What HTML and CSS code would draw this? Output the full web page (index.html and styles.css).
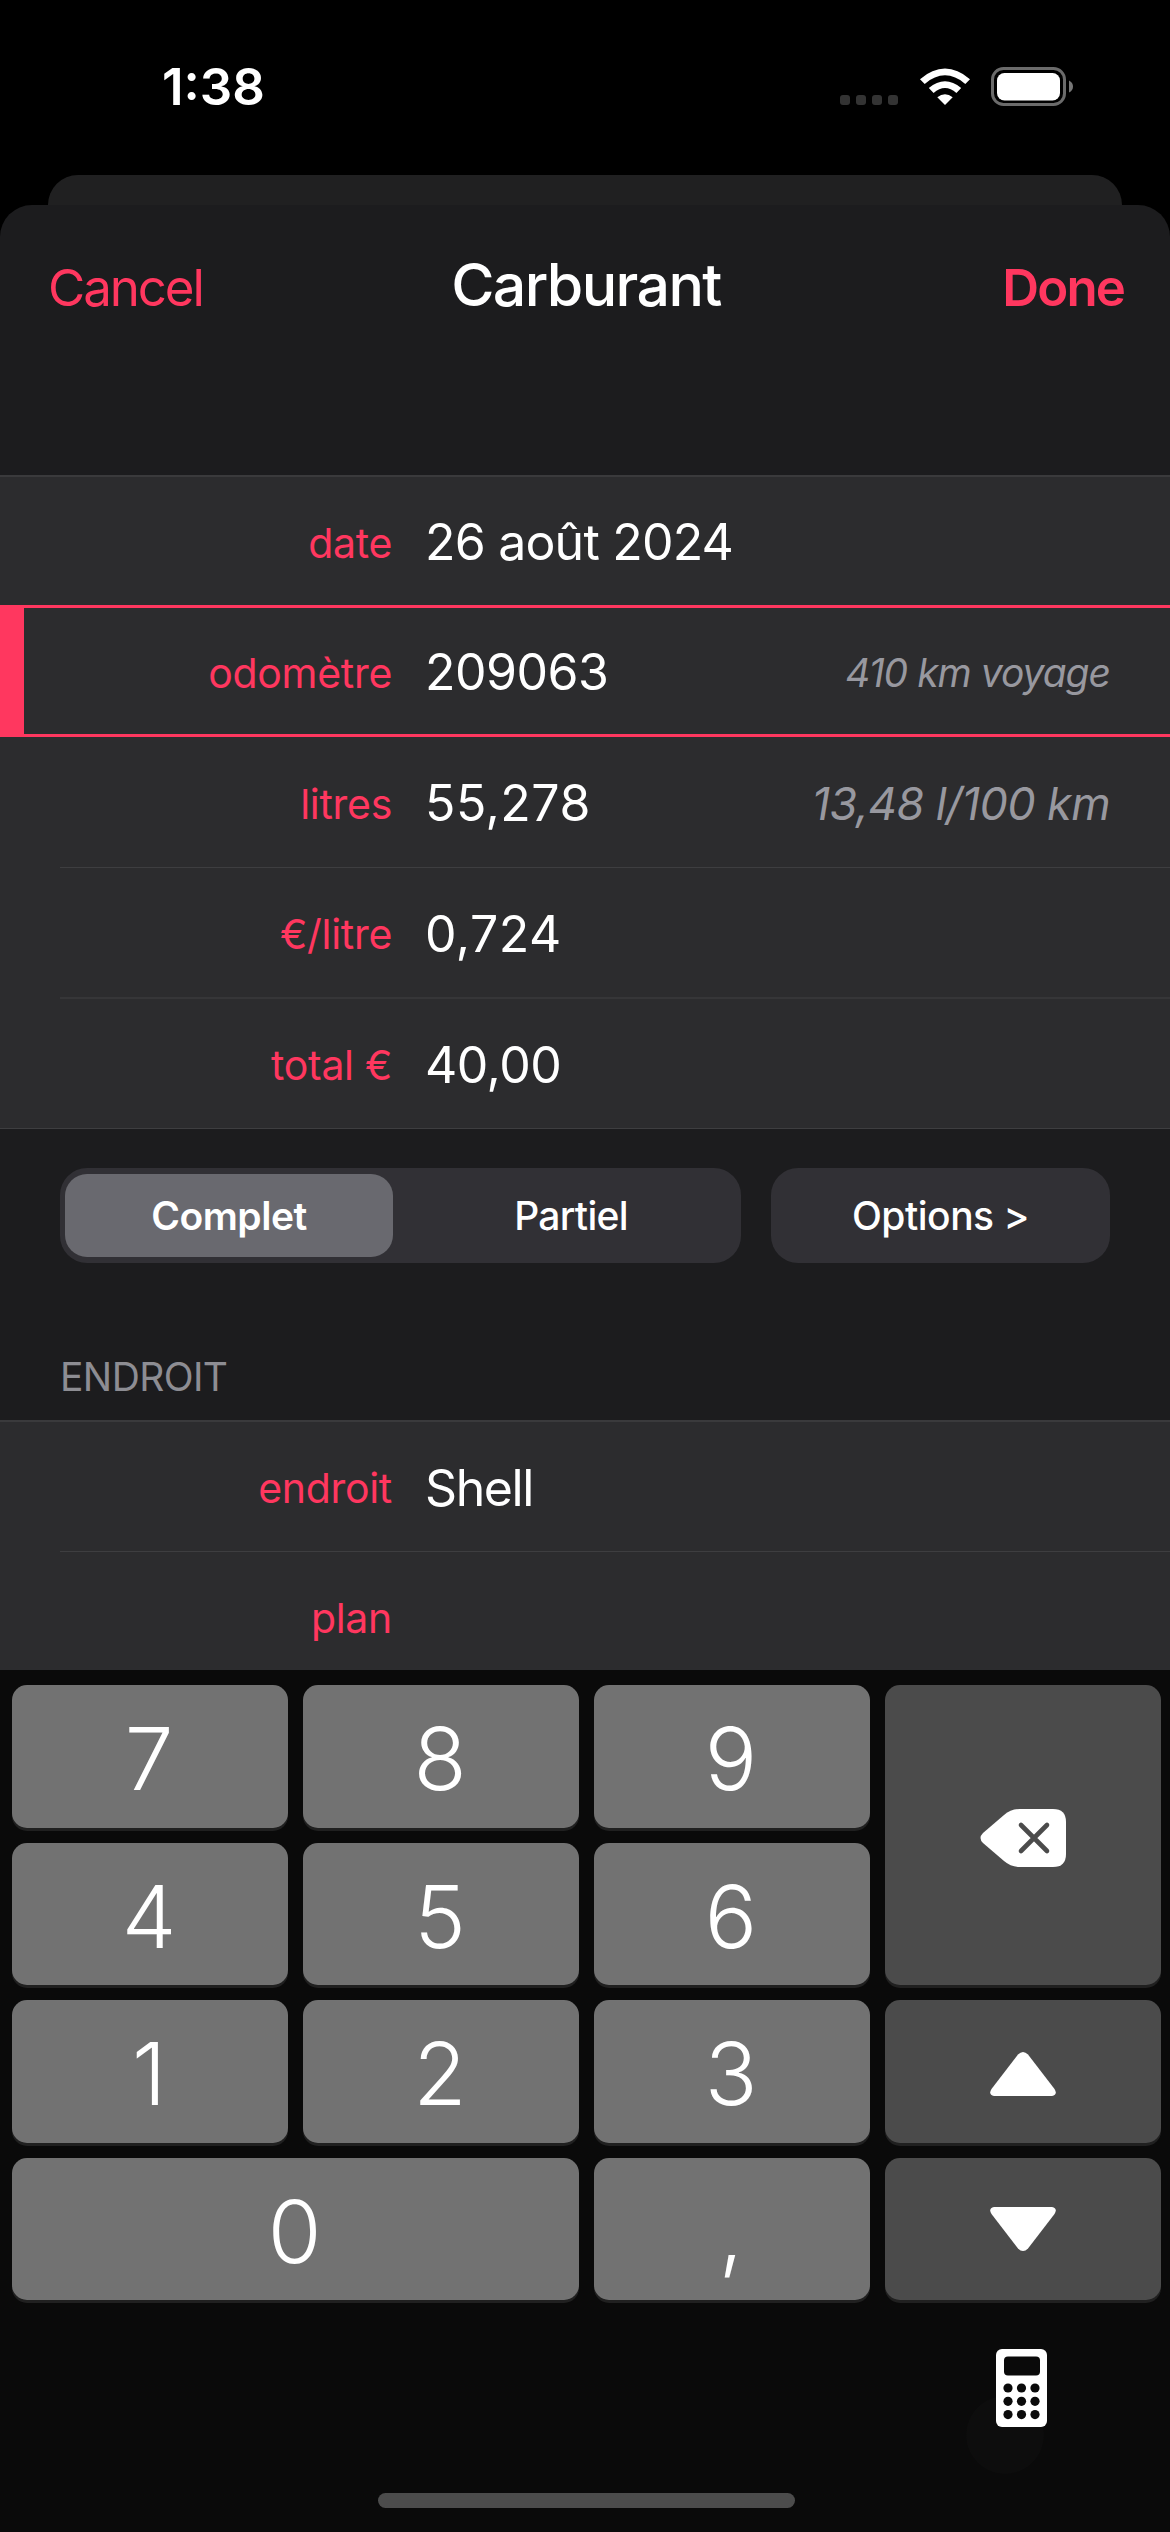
FILE: index.html
```html
<!DOCTYPE html>
<html lang="fr">

<head>
    <meta charset="UTF-8">
    <meta name="viewport" content="width=device-width, initial-scale=1.0">
    <title>Carburant</title>
    <link rel="stylesheet" href="styles.css">
</head>

<body>
    <div class="status-bar">
        <span class="time">1:38</span>
        <div class="status-icons">
            <div class="signal"><i></i><i></i><i></i><i></i></div>
            <svg class="wifi" width="52" height="38" viewBox="0 0 52 38">
                <path d="M1 11.2Q26 -10 51 11.2L46.3 15.9Q26 -1.2 5.7 15.9Z" fill="#fff" />
                <path d="M9.8 20Q26 6.6 42.2 20L37.4 25Q26 15.2 14.6 25Z" fill="#fff" />
                <path d="M18.3 29.3Q26 23 33.7 29.3L26 37Z" fill="#fff" />
            </svg>
            <svg class="battery" width="84" height="40" viewBox="0 0 84 40">
                <rect x="1.5" y="1.5" width="72" height="36" rx="11" fill="none" stroke="#6b6b6b" stroke-width="3" />
                <rect x="6" y="6" width="63" height="27.5" rx="7.5" fill="#fff" />
                <path d="M78 13.5Q82 15.5 82 19.5T78 25.5Z" fill="#777" />
            </svg>
        </div>
    </div>

    <div class="back-sheet"></div>

    <div class="sheet">
        <header>
            <a class="cancel">Cancel</a>
            <h1>Carburant</h1>
            <a class="done">Done</a>
        </header>

        <div class="group">
            <div class="row first">
                <label>date</label>
                <span class="value date">26 août 2024</span>
            </div>
            <div class="row active">
                <label>odomètre</label>
                <span class="value">209063</span>
                <em class="note small">410 km voyage</em>
            </div>
            <div class="row">
                <label>litres</label>
                <span class="value litres">55,278</span>
                <em class="note">13,48 l/100 km</em>
            </div>
            <div class="row thick">
                <label>€/litre</label>
                <span class="value litres">0,724</span>
            </div>
            <div class="row last">
                <label>total €</label>
                <span class="value">40,00</span>
            </div>
        </div>

        <div class="controls">
            <div class="segmented">
                <button class="segment selected">Complet</button>
                <button class="segment">Partiel</button>
            </div>
            <button class="options">Options &gt;</button>
        </div>

        <h2>ENDROIT</h2>

        <div class="group place">
            <div class="row">
                <label>endroit</label>
                <span class="value shell">Shell</span>
            </div>
            <div class="row last">
                <label>plan</label>
            </div>
        </div>
    </div>

    <!-- Clavier -->
    <div class="keyboard">
        <div class="keys">
            <button class="key">7</button>
            <button class="key">8</button>
            <button class="key">9</button>
            <button class="key dark tall">
                <svg width="86" height="60" viewBox="0 0 86 60">
                    <path d="M40 1H73Q86 1 86 14V46Q86 59 73 59H40Q31 59 24 53L3 35Q-2 30 3 25L24 7Q31 1 40 1Z" fill="#fff" />
                    <path d="M41 17L67 43M67 17L41 43" stroke="#4b4b4b" stroke-width="4.6" stroke-linecap="round" />
                </svg>
            </button>
            <button class="key">4</button>
            <button class="key">5</button>
            <button class="key">6</button>
            <button class="key">1</button>
            <button class="key">2</button>
            <button class="key">3</button>
            <button class="key dark up">
                <svg width="66" height="44" viewBox="0 0 66 44">
                    <path d="M28 2.5Q33 -2.5 38 2.5L64.5 37Q68 42.5 62 44H4Q-2 42.5 1.5 37Z" fill="#fff" />
                </svg>
            </button>
            <button class="key wide">0</button>
            <button class="key">,</button>
            <button class="key dark down">
                <svg width="66" height="44" viewBox="0 0 66 44">
                    <path d="M28 41.5Q33 46.5 38 41.5L64.5 7Q68 1.5 62 0H4Q-2 1.5 1.5 7Z" fill="#fff" />
                </svg>
            </button>
        </div>
        <div class="toolbar">
            <svg width="51" height="78" viewBox="0 0 51 78">
                <rect width="51" height="78" rx="6" fill="#fff" />
                <rect x="8" y="7.5" width="36" height="19" rx="4" fill="#0a0a0a" />
                <g fill="#0a0a0a">
                    <circle cx="12" cy="39" r="4.6" />
                    <circle cx="25.5" cy="39" r="4.6" />
                    <circle cx="39" cy="39" r="4.6" />
                    <circle cx="12" cy="52.3" r="4.6" />
                    <circle cx="25.5" cy="52.3" r="4.6" />
                    <circle cx="39" cy="52.3" r="4.6" />
                    <circle cx="12" cy="65.6" r="4.6" />
                    <circle cx="25.5" cy="65.6" r="4.6" />
                    <circle cx="39" cy="65.6" r="4.6" />
                </g>
            </svg>
        </div>
        <div class="home-bar"></div>
    </div>
</body>

</html>
```
FILE: styles.css
```css
* {
    margin: 0;
    padding: 0;
    box-sizing: border-box;
}

body {
    width: 1170px;
    height: 2532px;
    overflow: hidden;
    background-color: #000;
    color: #fff;
    font-family: 'Inter', sans-serif;
}

button {
    border: none;
    color: #fff;
    font-family: inherit;
}

svg {
    display: block;
}

/* Barre d'état */
.status-bar {
    height: 175px;
    padding: 56px 95px 0 162px;
    display: flex;
    justify-content: space-between;
}

.time {
    font-size: 51px;
    line-height: 62px;
    font-weight: 600;
}

.status-icons {
    display: flex;
    height: 62px;
}

.signal {
    display: flex;
    gap: 6px;
    padding-top: 39px;
    margin-right: 21px;
}

.signal i {
    width: 10px;
    height: 10px;
    border-radius: 3px;
    background-color: #333;
}

.wifi {
    margin: 12px 20px 0 0;
}

.battery {
    margin-top: 11px;
}

/* Feuille */
.back-sheet {
    height: 30px;
    margin: 0 48px;
    border-radius: 30px 30px 0 0;
    background-color: #202021;
}

.sheet {
    height: 1465px;
    border-radius: 32px 32px 0 0;
    background-color: #1c1c1e;
    overflow: hidden;
}

header {
    height: 270px;
    padding: 48px 46px 0 48px;
    display: grid;
    grid-template-columns: 1fr auto 1fr;
    align-items: start;
    color: #ff375f;
    font-size: 51px;
    line-height: 70px;
    letter-spacing: -2.1px;
}

header h1 {
    color: #fff;
    font-size: 59px;
    font-weight: 500;
    line-height: 64px;
    letter-spacing: -1.6px;
}

.done {
    text-align: right;
    font-weight: 600;
    letter-spacing: -1.9px;
}

/* Lignes du formulaire */
.group {
    background-color: #2c2c2e;
    border-top: 2px solid #3a3a3c;
}

.row {
    height: 131px;
    margin-left: 60px;
    padding: 2px 60px 0 0;
    border-bottom: 1px solid #3e3e40;
    display: flex;
    align-items: center;
}

.row label {
    width: 332px;
    margin-right: 33px;
    text-align: right;
    color: #ff375f;
    font-size: 41px;
    padding-top: 1px;
    letter-spacing: -0.3px;
}

.row.first {
    height: 128px;
    border: none;
}

.row.active {
    height: 132px;
    margin-left: 0;
    border: 3px solid #ff375f;
    border-width: 3px 0 3px 24px;
}

.row.active label {
    width: 368px;
}

.row.thick {
    border-bottom: 2px solid #363638;
}

.row.last {
    height: 130px;
    margin-left: 0;
    padding-left: 60px;
}

.place .row {
    height: 130px;
}

.value {
    flex: 1;
    font-size: 50px;
    letter-spacing: -0.5px;
}

.value.date {
    letter-spacing: -0.8px;
}

.value.litres {
    letter-spacing: 0.5px;
}

.value.shell {
    letter-spacing: -1.4px;
}

.note {
    color: #98989f;
    font-size: 45px;
    font-weight: 400;
    letter-spacing: -0.6px;
}

.note.small {
    font-size: 39px;
    letter-spacing: -1px;
}

/* Boutons */
.controls {
    display: flex;
    gap: 30px;
    padding: 39px 60px 0;
}

.segmented {
    display: flex;
    width: 681px;
    height: 95px;
    padding: 6px 5px;
    border-radius: 27px;
    background-color: #313035;
}

.segment {
    width: 328px;
    border-radius: 22px;
    background: none;
    font-size: 39px;
    font-weight: 500;
    letter-spacing: -0.7px;
}

.segment + .segment {
    width: 343px;
    padding-left: 13px;
}

.segment.selected {
    background-color: #69696f;
    font-weight: 600;
    letter-spacing: -0.5px;
}

.options {
    flex: 1;
    height: 95px;
    border-radius: 27px;
    background-color: #313035;
    font-size: 39px;
    font-weight: 500;
    letter-spacing: -0.5px;
}

h2 {
    height: 157px;
    padding: 90px 60px 0;
    color: #8d8d93;
    font-size: 39px;
    font-weight: 400;
    line-height: 47px;
    letter-spacing: -0.6px;
}

/* Clavier */
.keyboard {
    height: 862px;
    padding: 15px 10px 0 12px;
    background-color: #0a0a0a;
}

.keys {
    display: grid;
    grid-template-columns: repeat(4, 276px);
    grid-template-rows: repeat(4, 142.5px);
    gap: 15px;
}

.key {
    border-radius: 15px;
    background-color: #727272;
    box-shadow: 0 3px 0 #202020;
    font-size: 87px;
    font-weight: 300;
    display: flex;
    justify-content: center;
    align-items: center;
    padding: 5px 2px 0 0;
}

.dark {
    background-color: #4b4b4b;
    padding-right: 0;
}

.up {
    padding-top: 6px;
}

.down {
    padding-top: 0;
}

.tall {
    grid-row: span 2;
}

.wide {
    grid-column: span 2;
}

.toolbar {
    height: 193px;
    padding: 49px 113px 0 0;
    display: flex;
    justify-content: flex-end;
    background: radial-gradient(circle 39px at 993px 135px, #0d0d0d 98%, transparent);
}

.home-bar {
    width: 417px;
    height: 15px;
    margin: 0 auto;
    border-radius: 8px;
    background-color: #4c4c4c;
}
```
